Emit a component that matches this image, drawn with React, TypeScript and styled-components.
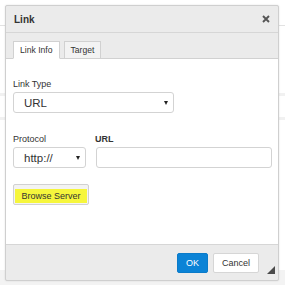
import React from "react";
import styled, { createGlobalStyle } from "styled-components";

const GlobalStyle = createGlobalStyle`
  html, body {
    margin: 0;
    padding: 0;
    background: #ffffff;
  }
  body {
    font-family: "Liberation Sans", Arial, sans-serif;
    color: #333333;
  }
`;

const Page = styled.div`
  width: 285px;
  height: 287px;
  padding: 5px 0 0 5px;
  box-sizing: border-box;
  overflow: hidden;
  background:
    linear-gradient(#e2e2e2, #e2e2e2) 0 25px / 100% 1px no-repeat,
    linear-gradient(#f1f1f1, #f1f1f1) 0 93px / 100% 3px no-repeat,
    linear-gradient(#f1f1f1, #f1f1f1) 0 117px / 100% 3px no-repeat,
    linear-gradient(#f3f3f3, #f3f3f3) 0 270px / 100% 15px no-repeat,
    #ffffff;
`;

const Dialog = styled.div`
  width: 274px;
  height: 276px;
  box-sizing: border-box;
  border: 1px solid #cfcfcf;
  border-radius: 2px;
  box-shadow: 0 0 2px rgba(0, 0, 0, 0.12);
  background: #ebebeb;
  display: flex;
  flex-direction: column;
  overflow: hidden;
`;

const Header = styled.div`
  height: 27px;
  box-sizing: border-box;
  border-bottom: 1px solid #d6d6d6;
  display: flex;
  align-items: center;
  justify-content: space-between;
  padding: 0 8px 0 8px;
`;

const Title = styled.span`
  font-size: 10px;
  font-weight: bold;
  color: #333333;
`;

const Close = styled.svg`
  width: 8px;
  height: 8px;
`;

const TabStrip = styled.div`
  height: 26px;
  box-sizing: border-box;
  border-bottom: 1px solid #d1d1d1;
  display: flex;
  align-items: flex-end;
  gap: 4px;
  padding-left: 7px;
`;

const Tab = styled.div<{ active?: boolean }>`
  height: 18px;
  box-sizing: border-box;
  margin-bottom: -1px;
  padding: 0 6px;
  display: flex;
  align-items: center;
  font-size: 8.6px;
  color: #333333;
  border: 1px solid #d1d1d1;
  border-bottom-color: ${(p) => (p.active ? "#ffffff" : "#d1d1d1")};
  background: ${(p) => (p.active ? "#ffffff" : "#f3f3f3")};
`;

const Body = styled.div`
  flex: 1;
  background: #ffffff;
  padding: 18px 6px 0 7px;
  display: flex;
  flex-direction: column;
`;

const Label = styled.div<{ bold?: boolean }>`
  font-size: 9px;
  line-height: 15px;
  height: 15px;
  color: #333333;
  font-weight: ${(p) => (p.bold ? "bold" : "normal")};
`;

const SelectBox = styled.div<{ w: number }>`
  width: ${(p) => p.w}px;
  height: 21px;
  box-sizing: border-box;
  border: 1px solid #d3d3d3;
  border-radius: 3px;
  background: #ffffff;
  display: flex;
  align-items: center;
  justify-content: space-between;
  padding: 0 5px 0 10px;
  font-size: 11.5px;
  color: #333333;
`;

const Arrow = styled.span`
  width: 0;
  height: 0;
  border-left: 2.5px solid transparent;
  border-right: 2.5px solid transparent;
  border-top: 4px solid #222222;
`;

const TextInput = styled.div`
  width: 176px;
  height: 21px;
  box-sizing: border-box;
  border: 1px solid #d3d3d3;
  border-radius: 3px;
  background: #ffffff;
  margin-left: 1px;
`;

const Row = styled.div`
  display: flex;
  gap: 9px;
  margin-top: 19px;
`;

const Column = styled.div`
  display: flex;
  flex-direction: column;
`;

const BrowseButton = styled.div`
  margin-top: 16px;
  width: 76px;
  height: 21px;
  box-sizing: border-box;
  border: 1px solid #d1d1d1;
  border-radius: 2px;
  background: #f3f3f3;
  display: flex;
  align-items: flex-end;
  padding: 0 0 1px 1px;
`;

const Highlight = styled.span`
  width: 72px;
  height: 14px;
  background: #f6f63c;
  font-size: 9px;
  line-height: 14px;
  text-align: center;
  color: #333333;
`;

const Footer = styled.div`
  height: 36px;
  box-sizing: border-box;
  border-top: 1px solid #d6d6d6;
  display: flex;
  align-items: center;
  justify-content: flex-end;
  padding-right: 3px;
`;

const Button = styled.div<{ primary?: boolean }>`
  height: 20px;
  box-sizing: border-box;
  width: ${(p) => (p.primary ? 31 : 46)}px;
  margin-left: 5px;
  border-radius: 2px;
  display: flex;
  align-items: center;
  justify-content: center;
  font-size: 9px;
  color: ${(p) => (p.primary ? "#ffffff" : "#333333")};
  background: ${(p) => (p.primary ? "#0b83d6" : "#ffffff")};
  border: 1px solid ${(p) => (p.primary ? "#0b7bc9" : "#d6d6d6")};
`;

const Grip = styled.svg`
  width: 8px;
  height: 8px;
  margin: 14px 0 0 8px;
`;

export default function App() {
  return (
    <>
      <GlobalStyle />
      <Page>
        <Dialog>
          <Header>
            <Title>Link</Title>
            <Close viewBox="0 0 8 8">
              <path d="M1 1 L7 7 M7 1 L1 7" stroke="#555" strokeWidth="1.9" />
            </Close>
          </Header>
          <TabStrip>
            <Tab active>Link Info</Tab>
            <Tab>Target</Tab>
          </TabStrip>
          <Body>
            <Label>Link Type</Label>
            <SelectBox w={161}>
              <span>URL</span>
              <Arrow />
            </SelectBox>
            <Row>
              <Column>
                <Label>Protocol</Label>
                <SelectBox w={73}>
                  <span>http://</span>
                  <Arrow />
                </SelectBox>
              </Column>
              <Column>
                <Label bold>URL</Label>
                <TextInput />
              </Column>
            </Row>
            <BrowseButton>
              <Highlight>Browse Server</Highlight>
            </BrowseButton>
          </Body>
          <Footer>
            <Button primary>OK</Button>
            <Button>Cancel</Button>
            <Grip viewBox="0 0 8 8">
              <polygon points="8,0 8,8 0,8" fill="#4a4a4a" />
            </Grip>
          </Footer>
        </Dialog>
      </Page>
    </>
  );
}
